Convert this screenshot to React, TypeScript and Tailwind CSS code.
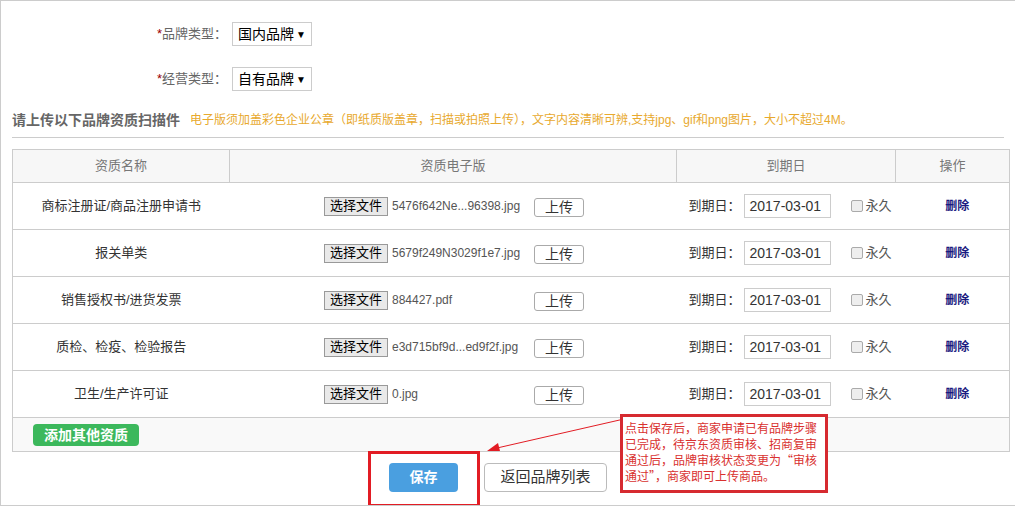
import React from "react";

const rows = [
	{ name: "商标注册证/商品注册申请书", file: "5476f642Ne...96398.jpg" },
	{ name: "报关单类", file: "5679f249N3029f1e7.jpg" },
	{ name: "销售授权书/进货发票", file: "884427.pdf" },
	{ name: "质检、检疫、检验报告", file: "e3d715bf9d...ed9f2f.jpg" },
	{ name: "卫生/生产许可证", file: "0.jpg" },
];

const note = [
	"点击保存后，商家申请已有品牌步骤",
	"已完成，待京东资质审核、招商复审",
	"通过后，品牌审核状态变更为“审核",
	"通过”，商家即可上传商品。",
];

function FakeSelect({ value }: { value: string }) {
	return (
		<div className="ml-[5px] flex h-[24px] w-[80px] items-center justify-between border border-[#ccc] bg-white pl-[5px] pr-[5px] text-[14px] text-black">
			<span>{value}</span>
			<span className="text-[10px]">▼</span>
		</div>
	);
}

function FormRow({ label, value }: { label: string; value: string }) {
	return (
		<div className="flex items-center">
			<div className="w-[226px] text-right text-[13px] text-[#666]">
				<span className="text-[#990000]">*</span>
				{label}：
			</div>
			<FakeSelect value={value} />
		</div>
	);
}

export default function App() {
	return (
		<div className="relative h-[506px] w-[1015px] overflow-hidden border-l border-t border-b border-[#ccc] bg-white font-['Liberation_Sans','Noto_Sans_CJK_SC',sans-serif]">
			<div className="flex flex-col gap-[21px] pt-[21px]">
				<FormRow label="品牌类型" value="国内品牌" />
				<FormRow label="经营类型" value="自有品牌" />
			</div>

			<div className="mx-[11px] mt-[19px] flex h-[28px] items-start gap-[10px] border-b border-[#ccc]">
				<span className="text-[14px] leading-[20px] font-bold text-[#666]">
					请上传以下品牌资质扫描件
				</span>
				<span className="text-[12px] leading-[20px] text-[#e8a92e]">
					电子版须加盖彩色企业公章（即纸质版盖章，扫描或拍照上传），文字内容清晰可辨,支持jpg、gif和png图片，大小不超过4M。
				</span>
			</div>

			<table className="mt-[11px] ml-[11px] w-[997px] table-fixed border-collapse">
				<colgroup>
					<col className="w-[217px]" />
					<col className="w-[447px]" />
					<col className="w-[219px]" />
					<col className="w-[114px]" />
				</colgroup>
				<thead>
					<tr className="h-[33px] bg-[#f7f7f7] text-[13px] text-[#777]">
						<th className="border border-[#ccc] font-normal">资质名称</th>
						<th className="border border-[#ccc] font-normal">资质电子版</th>
						<th className="border border-[#ccc] font-normal">到期日</th>
						<th className="border border-[#ccc] font-normal">操作</th>
					</tr>
				</thead>
				<tbody>
					{rows.map((row) => (
						<tr key={row.name} className="h-[47px]">
							<td className="border-y border-l border-[#ccc] text-center text-[13px] text-[#333]">
								{row.name}
							</td>
							<td className="border-y border-[#ccc]">
								<div className="flex items-center justify-center">
									<div className="ml-[2px] flex h-[19px] w-[64px] items-center justify-center border border-[#999] bg-[#e9e9e9] text-[13px] text-black">
										选择文件
									</div>
									<div className="ml-[4px] w-[142px] truncate text-[12px] text-[#555]">
										{row.file}
									</div>
									<div className="mt-[3px] flex h-[19px] w-[50px] items-center justify-center rounded-[3px] border border-[#aaa] bg-white text-[14px] text-[#333]">
										上传
									</div>
								</div>
							</td>
							<td className="border-y border-[#ccc] pl-[12px]">
								<div className="flex items-center">
									<span className="w-[55px] text-[13px] text-[#333]">到期日：</span>
									<div className="flex h-[24px] w-[87px] items-center border border-[#ccc] pl-[5px] text-[14px] text-[#333]">
										2017-03-01
									</div>
									<span className="ml-[20px] h-[12px] w-[12px] rounded-[2px] border border-[#aaa] bg-[#eee]" />
									<span className="ml-[3px] text-[13px] text-[#555]">永久</span>
								</div>
							</td>
							<td className="border-y border-r border-[#ccc] pl-[10px] text-center text-[12px] font-bold text-[#1a1a80]">
								删除
							</td>
						</tr>
					))}
					<tr className="h-[34px] bg-[#f9f9f9]">
						<td colSpan={4} className="border border-[#ccc] pl-[20px]">
							<span className="inline-flex h-[22px] w-[106px] items-center justify-center rounded-[4px] bg-[#3cb85c] text-[14px] font-bold text-white">
								添加其他资质
							</span>
						</td>
					</tr>
				</tbody>
			</table>

			<div className="mt-[11px] ml-[388px] flex items-center gap-[26px]">
				<div className="flex h-[29px] w-[69px] items-center justify-center rounded-[4px] bg-[#4a9fe0] text-[14px] font-bold text-white">
					保存
				</div>
				<div className="flex h-[29px] w-[123px] items-center justify-center rounded-[4px] border border-[#bbb] bg-white text-[15px] text-[#333]">
					返回品牌列表
				</div>
			</div>

			{/* annotation overlay */}
			<div className="absolute left-[367px] top-[450px] h-[56px] w-[112px] border-[3px] border-[#e21c24]" />
			<svg className="absolute left-0 top-0" width="1015" height="506">
				<line x1="623" y1="418" x2="496" y2="447" stroke="#e21c24" strokeWidth="1" />
				<polygon points="486,450 497,442 499,450" fill="#e21c24" />
			</svg>
			<div className="absolute left-[619px] top-[413px] h-[79px] w-[208px] border-[3px] border-[#d62a30] bg-white px-[2px] pt-[3px] font-['Noto_Sans_CJK_SC',sans-serif] text-[12px] leading-[16px] whitespace-nowrap text-[#d9312f]">
				{note.map((line) => (
					<div key={line}>{line}</div>
				))}
			</div>
		</div>
	);
}
